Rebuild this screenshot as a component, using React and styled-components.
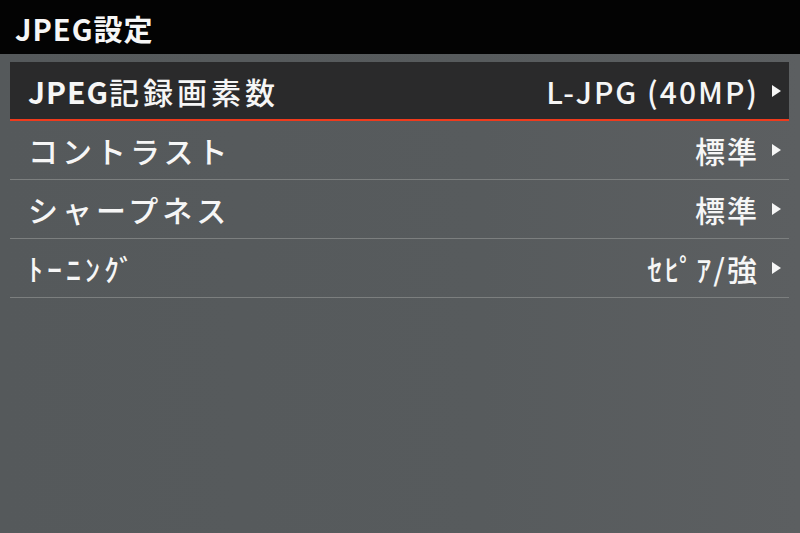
import styled, { createGlobalStyle } from "styled-components";

const GlobalStyle = createGlobalStyle`
  html, body {
    margin: 0;
    padding: 0;
    background: #575b5d;
  }
  * {
    box-sizing: border-box;
  }
`;

const items = [
  { latin: "JPEG", label: "記録画素数", value: "L-JPG (40MP)", selected: true },
  { label: "コントラスト", value: "標準" },
  { label: "シャープネス", value: "標準" },
  { label: "ﾄｰﾆﾝｸﾞ", value: "ｾﾋﾟｱ/強" },
];

function App() {
  return (
    <>
      <GlobalStyle />
      <Screen>
        <Header>
          <Title>JPEG設定</Title>
        </Header>
        <MenuList>
          {items.map((item) => (
            <Row key={item.label} selected={item.selected}>
              <Label>
                {item.latin && <Latin>{item.latin}</Latin>}
                {item.label}
              </Label>
              <ValueGroup>
                <Value>{item.value}</Value>
                <Arrow />
              </ValueGroup>
            </Row>
          ))}
        </MenuList>
      </Screen>
    </>
  );
}
export default App;

const Screen = styled.div`
  width: 800px;
  height: 533px;
  display: flex;
  flex-direction: column;
  background: linear-gradient(90deg, #55595b 0%, #575b5d 60%, #5c5f61 100%);
  font-family: "Noto Sans CJK JP", "Noto Sans", sans-serif;
  color: #f6f6f6;
  overflow: hidden;
`;

const Header = styled.div`
  height: 54px;
  background: #030303;
  display: flex;
  align-items: center;
  padding-left: 15px;
  flex-shrink: 0;
`;

const Title = styled.div`
  font-size: 29px;
  font-weight: 700;
  letter-spacing: 1px;
  line-height: 1;
  margin-top: 2px;
`;

const MenuList = styled.div`
  display: flex;
  flex-direction: column;
  padding: 8px 11px 0 10px;
`;

const Row = styled.div`
  height: 59px;
  display: flex;
  align-items: center;
  justify-content: space-between;
  padding: 0 8px 0 18px;
  background: ${(props) => (props.selected ? "#2a2a2b" : "transparent")};
  border-bottom: ${(props) =>
    props.selected ? "2px solid #f03a1c" : "1px solid #7c7f7f"};
`;

const Label = styled.div`
  font-size: 30px;
  font-weight: 500;
  letter-spacing: 4px;
  line-height: 1;
`;

const Latin = styled.span`
  font-weight: 700;
  letter-spacing: 1px;
`;

const ValueGroup = styled.div`
  display: flex;
  align-items: center;
  gap: 13px;
`;

const Value = styled.div`
  font-size: 30px;
  font-weight: 500;
  letter-spacing: 2px;
  line-height: 1;
`;

const Arrow = styled.span`
  width: 0;
  height: 0;
  border-top: 6px solid transparent;
  border-bottom: 6px solid transparent;
  border-left: 9px solid #f6f6f6;
`;
